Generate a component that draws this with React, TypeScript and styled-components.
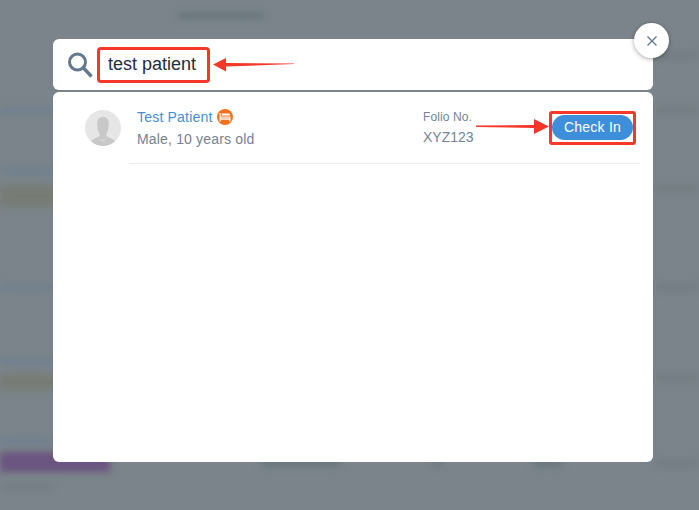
import React from "react";
import styled, { createGlobalStyle } from "styled-components";

const GlobalStyle = createGlobalStyle`
  html, body {
    margin: 0;
    padding: 0;
    height: 100%;
    overflow: hidden;
    background: #7b848a;
    font-family: "Liberation Sans", Arial, sans-serif;
  }
`;

const Screen = styled.div`
  position: relative;
  width: 699px;
  height: 510px;
  overflow: hidden;
  background: #7b848a;
`;

/* the page behind the modal, only visible blurred */
const BlurredPage = styled.div`
  display: flex;
  flex-direction: column;
  height: 100%;
  filter: blur(3.5px);
`;

const TopBar = styled.div`
  height: 52px;
  padding-top: 12px;
  padding-left: 178px;
  box-sizing: border-box;
  flex-shrink: 0;
`;

const Smudge = styled.div<{ $w: number; $color?: string; $h?: number }>`
  width: ${(p) => p.$w}px;
  height: ${(p) => p.$h ?? 7}px;
  background: ${(p) => p.$color ?? "#69767c"};
`;

const BgRow = styled.div<{ $h: number }>`
  height: ${(p) => p.$h}px;
  display: flex;
  justify-content: space-between;
  align-items: flex-start;
  flex-shrink: 0;
`;

const BgBottomCells = styled.div`
  display: flex;
  padding-left: 152px;
  flex: 1;
  justify-content: space-between;
  padding-top: 8px;
`;

const Overlay = styled.div`
  position: absolute;
  inset: 0;
  padding: 39px 46px 48px 53px;
  box-sizing: border-box;
  display: flex;
  flex-direction: column;
  gap: 2px;
`;

const SearchBar = styled.div`
  height: 51px;
  flex-shrink: 0;
  background: #fff;
  border-radius: 6px;
  display: flex;
  align-items: center;
  box-sizing: border-box;
  padding-left: 14px;
  gap: 4px;
`;

const SearchBox = styled.div`
  width: 113px;
  height: 36px;
  box-sizing: border-box;
  border: 3px solid #f5382a;
  border-radius: 4px;
  font-size: 18px;
  line-height: 29px;
  padding-left: 8px;
  color: #1f2d3d;
  white-space: nowrap;
  margin-top: 1px;
`;

const Results = styled.div`
  flex: 1;
  background: #fff;
  border-radius: 6px;
`;

const ResultRow = styled.div`
  display: flex;
  margin-left: 32px;
  padding-top: 18px;
`;

const Avatar = styled.div`
  width: 36px;
  height: 36px;
  flex-shrink: 0;
  margin-right: 8px;
  border-radius: 50%;
  overflow: hidden;
  background: #e6e6e6;
`;

const RowBody = styled.div`
  flex: 1;
  height: 53px;
  margin-right: 13px;
  display: flex;
  border-bottom: 1px solid #e9ecef;
`;

const PatientInfo = styled.div`
  width: 294px;
  padding-left: 8px;
  box-sizing: border-box;
  flex-shrink: 0;
`;

const NameLine = styled.div`
  display: flex;
  align-items: center;
  gap: 4px;
  font-size: 14px;
  letter-spacing: 0.2px;
  line-height: 16px;
  color: #3e8fdb;
  margin-top: -1px;
`;

const Details = styled.div`
  font-size: 14px;
  letter-spacing: 0.17px;
  line-height: 16px;
  margin-top: 6px;
  color: #738394;
`;

const Folio = styled.div`
  width: 126px;
  flex-shrink: 0;
`;

const FolioLabel = styled.div`
  font-size: 12px;
  letter-spacing: 0.1px;
  line-height: 14px;
  color: #738394;
`;

const FolioValue = styled.div`
  font-size: 14px;
  line-height: 16px;
  margin-top: 5px;
  color: #738394;
`;

const ButtonFrame = styled.div`
  width: 87px;
  height: 34px;
  box-sizing: border-box;
  border: 3px solid #f5382a;
  border-radius: 3px;
  margin-top: 1px;
  padding: 1px 0 0 0;
`;

const CheckInButton = styled.button`
  width: 81px;
  height: 25px;
  padding: 0;
  border: 0;
  border-radius: 13px;
  background: #3d8fdc;
  color: #fff;
  font-family: inherit;
  font-size: 14px;
  letter-spacing: 0.25px;
  line-height: 25px;
`;

const CloseButton = styled.button`
  position: absolute;
  left: 634px;
  top: 23px;
  width: 35px;
  height: 35px;
  padding: 0;
  border: 0;
  border-radius: 50%;
  background: #fff;
  box-shadow: 0 1px 4px rgba(0, 0, 0, 0.35);
  display: flex;
  align-items: center;
  justify-content: center;
`;

const Arrow = styled.svg`
  position: absolute;
  overflow: visible;
`;

const SearchArrow = styled(Arrow)`
  left: 213px;
  top: 57px;
`;

const CheckInArrow = styled(Arrow)`
  left: 476px;
  top: 118px;
`;

const SearchIcon = () => (
  <svg width="26" height="26" viewBox="0 0 26 26" fill="none">
    <circle cx="10.5" cy="10" r="8" stroke="#64798f" strokeWidth="3" />
    <path d="M16.5 16l8 8.5" stroke="#64798f" strokeWidth="3.4" />
  </svg>
);

const AvatarGlyph = () => (
  <svg width="36" height="36" viewBox="0 0 36 36">
    <path
      d="M18 7c-4 0-5.800 2.600-5.800 6.500 0 3.500.6 7 2 9.500.8 1.400.7 3-.4 3.800C11.500 28 8.500 28.500 6 31c3 3.200 7.500 5 12 5s9-1.800 12-5c-2.500-2.500-5.500-3-7.800-4.200-1.100-.8-1.200-2.400-.4-3.800 1.400-2.500 2-6 2-9.500C23.800 9.600 22 7 18 7z"
      fill="#c8c8c8"
    />
    <path d="M13.500 27.500l4.500 2.500 4.500-2.500-4.500 4z" fill="#dedede" />
  </svg>
);

const BedBadge = () => (
  <svg width="16" height="16" viewBox="0 0 16 16">
    <circle cx="8" cy="8" r="8" fill="#f4711c" />
    <path d="M2.500 4v8.500h1.200v-1.700h8.600v1.700h1.200V7.500H3.700V4z" fill="#fff" />
    <path d="M4.800 6.500h8V5.200c0-.5-.3-.8-.8-.8H4.800z" fill="#fff" />
    <path d="M3.700 8.600h8.600v.7H3.700z" fill="#f4711c" />
  </svg>
);

const CloseGlyph = () => (
  <svg width="12" height="12" viewBox="0 0 12 12">
    <path d="M1.500 1.500l9 9M10.500 1.500l-9 9" stroke="#64798f" strokeWidth="1.400" />
  </svg>
);

const BLUE = "#6e808f";
const OLIVE = "#777b74";
const EDGE = "#717c81";

const bgRows: { h: number; left?: number; leftColor?: string; leftH?: number; right?: boolean }[] = [
  { h: 55, right: true },
  { h: 60, left: 55, leftColor: BLUE, right: true },
  { h: 18, left: 55, leftColor: BLUE },
  { h: 99, left: 58, leftColor: OLIVE, leftH: 22, right: true },
  { h: 74, left: 55, leftColor: BLUE, right: true },
  { h: 16, left: 55, leftColor: BLUE },
  { h: 63, left: 58, leftColor: OLIVE, leftH: 16, right: true },
  { h: 15, left: 52, leftColor: BLUE },
];

const App = () => {
  return (
    <Screen>
      <GlobalStyle />
      <BlurredPage>
        <TopBar>
          <Smudge $w={86} />
        </TopBar>
        {bgRows.map((row, idx) => (
          <BgRow key={idx} $h={row.h}>
            {row.left ? <Smudge $w={row.left} $color={row.leftColor} $h={row.leftH} /> : <span />}
            {row.right ? <Smudge $w={44} $color={EDGE} /> : <span />}
          </BgRow>
        ))}
        <BgRow $h={32}>
          <Smudge $w={110} $color="#6a5480" $h={20} />
          <BgBottomCells>
            <Smudge $w={78} />
            <Smudge $w={8} />
            <Smudge $w={28} />
            <Smudge $w={44} $color={EDGE} />
          </BgBottomCells>
        </BgRow>
        <Smudge $w={52} $color="#717c82" $h={6} />
      </BlurredPage>

      <Overlay>
        <SearchBar>
          <SearchIcon />
          <SearchBox>test patient</SearchBox>
        </SearchBar>
        <Results>
          <ResultRow>
            <Avatar>
              <AvatarGlyph />
            </Avatar>
            <RowBody>
              <PatientInfo>
                <NameLine>
                  Test Patient
                  <BedBadge />
                </NameLine>
                <Details>Male, 10 years old</Details>
              </PatientInfo>
              <Folio>
                <FolioLabel>Folio No.</FolioLabel>
                <FolioValue>XYZ123</FolioValue>
              </Folio>
              <ButtonFrame>
                <CheckInButton>Check In</CheckInButton>
              </ButtonFrame>
            </RowBody>
          </ResultRow>
        </Results>
      </Overlay>

      <CloseButton>
        <CloseGlyph />
      </CloseButton>

      <SearchArrow width="82" height="14" viewBox="0 0 82 14">
        <path d="M0 7.500L13 1v5L81 6.500v.5L13 9.500v5z" fill="#f5382a" />
      </SearchArrow>
      <CheckInArrow width="73" height="16" viewBox="0 0 73 16">
        <path d="M0 7.500L58 7V1l15 7.500L58 16v-6L0 9z" fill="#f5382a" />
      </CheckInArrow>
    </Screen>
  );
};

export default App;
